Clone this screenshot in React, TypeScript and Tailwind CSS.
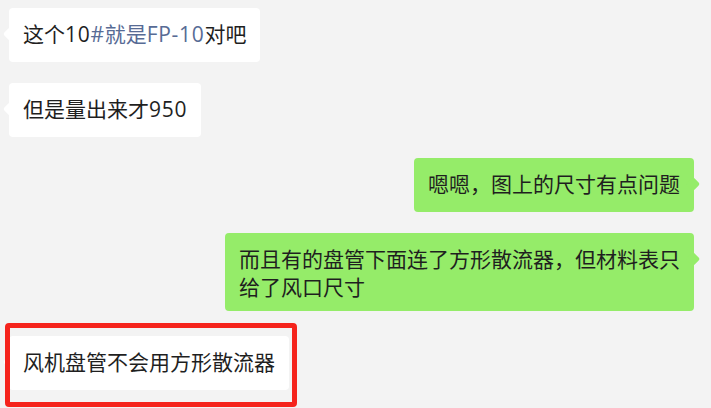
import React from 'react';

type Msg = {
  id: number;
  side: 'left' | 'right';
  lines: React.ReactNode[];
  marked?: boolean;
};

// Latin runs render a bit wider in the original font
const Latin = ({ children }: { children: React.ReactNode }) => (
  <span className="tracking-[0.7px]">{children}</span>
);

const messages: Msg[] = [
  {
    id: 1,
    side: 'left',
    lines: [
      <>
        这个<Latin>10</Latin>
        <span className="text-[#576b95]">
          <Latin>#</Latin>就是<Latin>FP-10</Latin>
        </span>
        对吧
      </>
    ]
  },
  { id: 2, side: 'left', lines: [<>但是量出来才<Latin>950</Latin></>] },
  { id: 3, side: 'right', lines: ['嗯嗯，图上的尺寸有点问题'] },
  { id: 4, side: 'right', lines: ['而且有的盘管下面连了方形散流器，但材料表只', '给了风口尺寸'] },
  { id: 5, side: 'left', lines: ['风机盘管不会用方形散流器'], marked: true }
];

function Bubble({ msg }: { msg: Msg }) {
  const isRight = msg.side === 'right';
  const multi = msg.lines.length > 1;
  return (
    <div className={`relative rounded-[4px] px-[14px] pt-[12px] ${multi ? 'pb-[10px]' : 'pb-[14px]'} ${isRight ? 'bg-[#95ec69]' : 'bg-white'}`}>
      {/* little tail */}
      <div
        className={`absolute top-[21px] w-[10px] h-[10px] rotate-45 rounded-[2px] ${
          isRight ? 'right-[-4px] bg-[#95ec69]' : 'left-[-4px] bg-white'
        }`}
      ></div>
      <div className="relative text-[21px] leading-[28px] text-[#1f1f1f] whitespace-nowrap">
        {msg.lines.map((line, i) => (
          <div key={i}>{line}</div>
        ))}
      </div>
    </div>
  );
}

export default function App() {
  return (
    <div
      className="w-[711px] h-[408px] overflow-hidden bg-[#f3f3f3] flex flex-col gap-[21px] pt-[8px]"
      style={{ fontFamily: '"Open Sans", "Noto Sans CJK SC", sans-serif' }}
    >
      {messages.map(msg => (
        <div
          key={msg.id}
          className={`relative flex ${msg.side === 'right' ? 'justify-end pr-[17px]' : 'justify-start pl-[9px]'} ${msg.marked ? 'mt-[4px]' : ''}`}
        >
          <Bubble msg={msg} />
          {msg.marked && (
            <div className="absolute left-[5px] top-[-13px] w-[292px] h-[84px] border-[5px] border-[#f5231c] rounded-[4px]"></div>
          )}
        </div>
      ))}
    </div>
  );
}
